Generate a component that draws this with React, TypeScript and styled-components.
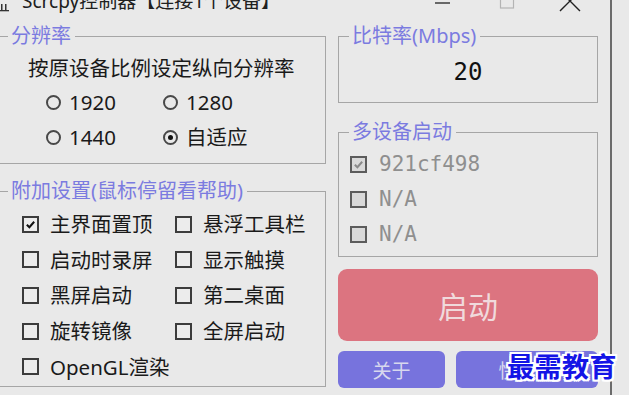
import React from 'react';
import styled, {createGlobalStyle} from 'styled-components';

const GlobalStyle = createGlobalStyle`
  html, body {
    margin: 0;
    padding: 0;
    background: #e9e9e9;
    overflow: hidden;
  }
  body {
    font-family: "Noto Sans", "Noto Sans CJK SC", sans-serif;
    color: #1a1a1a;
  }
`;

const Screen = styled.div`
  position: relative;
  width: 629px;
  height: 395px;
  overflow: hidden;
  background: #e9e9e9;
`;

const Window = styled.div`
  width: 610px;
  height: 395px;
  border-right: 2px solid #6b6b6b;
  display: flex;
  flex-direction: column;
`;

const TitleBar = styled.div`
  height: 14px;
  display: flex;
  align-items: flex-start;
  overflow: hidden;
`;

const AppIcon = styled.svg`
  width: 10px;
  height: 14px;
  flex: none;
`;

const Title = styled.div`
  margin: -8px 0 0 12px;
  font-size: 19px;
  line-height: 19px;
  color: #202020;
  white-space: nowrap;
`;

const Caption = styled.div`
  margin-left: auto;
  margin-right: 7px;
  display: flex;
`;

const CaptionButton = styled.div`
  width: 64px;
  height: 14px;
  display: flex;
  justify-content: center;
`;

const Content = styled.div`
  display: flex;
  gap: 12px;
  padding-top: 11px;
  margin-left: -3px;
`;

const Column = styled.div<{ $w: number }>`
  width: ${p => p.$w}px;
  display: flex;
  flex-direction: column;
`;

const Group = styled.fieldset<{ $h: number; $gap?: number }>`
  margin: 0 0 ${p => p.$gap ?? 0}px 0;
  padding: 0;
  min-width: 0;
  height: ${p => p.$h}px;
  box-sizing: border-box;
  border: 1px solid #a6a6a6;
`;

const Legend = styled.legend`
  margin-left: 10px;
  padding: 0 4px 0 3px;
  font-size: 20px;
  line-height: 22px;
  color: #7b7be0;
`;

const Hint = styled.div`
  padding: 8px 0 0 30px;
  font-size: 20.5px;
  line-height: 26px;
`;

const OptionGrid = styled.div<{ $left: number; $col: number; $top: number; $gap: number }>`
  display: grid;
  grid-template-columns: ${p => p.$col}px 1fr;
  grid-auto-rows: 26px;
  row-gap: ${p => p.$gap}px;
  padding: ${p => p.$top}px 0 0 ${p => p.$left}px;
`;

const Option = styled.label<{ $gap: number }>`
  display: flex;
  align-items: center;
  gap: ${p => p.$gap}px;
  font-size: 20.5px;
  line-height: 26px;
  white-space: nowrap;
`;

const Radio = styled.span<{ $on?: boolean }>`
  width: 15px;
  height: 15px;
  box-sizing: border-box;
  border: 2.5px solid #484848;
  border-radius: 50%;
  flex: none;
  display: flex;
  align-items: center;
  justify-content: center;

  &::after {
    content: "";
    width: 5px;
    height: 5px;
    border-radius: 50%;
    background: #111;
    display: ${p => (p.$on ? 'block' : 'none')};
  }
`;

const Box = styled.span<{ $disabled?: boolean }>`
  width: 17px;
  height: 17px;
  box-sizing: border-box;
  border: 2px solid ${p => (p.$disabled ? '#5c5c5c' : '#3c3c3c')};
  background: ${p => (p.$disabled ? '#d9d9d9' : '#ececec')};
  flex: none;
  display: flex;
  align-items: center;
  justify-content: center;
`;

const BitrateValue = styled.div`
  padding-top: 10px;
  text-align: center;
  font-family: "DejaVu Sans Mono", "Liberation Mono", monospace;
  font-size: 24px;
  line-height: 30px;
  color: #111;
`;

const DeviceList = styled.div`
  display: grid;
  grid-auto-rows: 26px;
  row-gap: 9px;
  padding: 8px 0 0 11px;
`;

const Device = styled.div`
  display: flex;
  align-items: center;
  gap: 12px;
  font-family: "DejaVu Sans Mono", "Liberation Mono", monospace;
  font-size: 21px;
  color: #8f8f8f;
`;

const StartButton = styled.button`
  margin-top: 12px;
  height: 72px;
  border: none;
  border-radius: 9px;
  background: #dc7480;
  color: #f0dadc;
  font-family: "Noto Sans CJK SC", sans-serif;
  font-size: 30px;
  padding: 0;
`;

const ButtonRow = styled.div`
  margin-top: 10px;
  display: flex;
  gap: 11px;
`;

const SmallButton = styled.button<{ $w: number }>`
  width: ${p => p.$w}px;
  height: 37px;
  border: none;
  border-radius: 6px;
  background: #7773dd;
  color: #d8d8ee;
  font-family: "Noto Sans CJK SC", sans-serif;
  font-size: 19px;
  padding: 0;
`;

const Watermark = styled.div`
  position: absolute;
  left: 507px;
  top: 346px;
  font-family: "Noto Sans CJK SC", sans-serif;
  font-weight: 700;
  font-size: 27px;
  line-height: 40px;
  letter-spacing: 0.5px;
  color: #1414e6;
  text-shadow: -2px 0 #fff, 2px 0 #fff, 0 -2px #fff, 0 2px #fff,
    -2px -2px #fff, 2px 2px #fff, -2px 2px #fff, 2px -2px #fff;
`;

function Tick({color}: { color: string }) {
  return (
    <svg width="11" height="11" viewBox="0 0 12 12">
      <path d="M2 6.2 L4.8 9 L10 3" fill="none" stroke={color} strokeWidth="2.2"/>
    </svg>
  );
}

const extras: [string, boolean][] = [
  ['主界面置顶', true], ['悬浮工具栏', false],
  ['启动时录屏', false], ['显示触摸', false],
  ['黑屏启动', false], ['第二桌面', false],
  ['旋转镜像', false], ['全屏启动', false],
  ['OpenGL渲染', false],
];

const devices: [string, boolean][] = [
  ['921cf498', true],
  ['N/A', false],
  ['N/A', false],
];

export default function App() {
  return (
    <Screen>
      <GlobalStyle/>
      <Window>
        <TitleBar>
          <AppIcon viewBox="0 0 10 14">
            <rect x="1" y="4" width="1.5" height="6" fill="#333"/>
            <rect x="5" y="4" width="1.5" height="6" fill="#333"/>
            <rect x="0" y="10" width="9" height="1.3" fill="#333"/>
          </AppIcon>
          <Title>Scrcpy控制器【连接1个设备】</Title>
          <Caption>
            <CaptionButton>
              <svg width="24" height="14" viewBox="0 0 24 14">
                <line x1="4" y1="3" x2="19" y2="3" stroke="#222" strokeWidth="1.3"/>
              </svg>
            </CaptionButton>
            <CaptionButton>
              <svg width="24" height="14" viewBox="0 0 24 14">
                <rect x="5.5" y="-6" width="13" height="14" fill="none" stroke="#b4b4b4" strokeWidth="1.2"/>
              </svg>
            </CaptionButton>
            <CaptionButton>
              <svg width="24" height="14" viewBox="0 0 24 14">
                <path d="M1 -9 L21 11 M21 -9 L1 11" fill="none" stroke="#222" strokeWidth="1.4"/>
              </svg>
            </CaptionButton>
          </Caption>
        </TitleBar>

        <Content>
          <Column $w={329}>
            <Group $h={139} $gap={16}>
              <Legend>分辨率</Legend>
              <Hint>按原设备比例设定纵向分辨率</Hint>
              <OptionGrid $left={48} $col={117} $top={8} $gap={9}>
                <Option $gap={8}><Radio/>1920</Option>
                <Option $gap={8}><Radio/>1280</Option>
                <Option $gap={8}><Radio/>1440</Option>
                <Option $gap={8}><Radio $on/>自适应</Option>
              </OptionGrid>
            </Group>
            <Group $h={207}>
              <Legend>附加设置(鼠标停留看帮助)</Legend>
              <OptionGrid $left={24} $col={153} $top={9} $gap={9.7}>
                {extras.map(([label, on]) => (
                  <Option $gap={11} key={label}>
                    <Box>{on && <Tick color="#111"/>}</Box>
                    {label}
                  </Option>
                ))}
              </OptionGrid>
            </Group>
          </Column>

          <Column $w={260}>
            <Group $h={78} $gap={18}>
              <Legend>比特率(Mbps)</Legend>
              <BitrateValue>20</BitrateValue>
            </Group>
            <Group $h={136}>
              <Legend>多设备启动</Legend>
              <DeviceList>
                {devices.map(([name, on], i) => (
                  <Device key={i}>
                    <Box $disabled>{on && <Tick color="#8a8a8a"/>}</Box>
                    {name}
                  </Device>
                ))}
              </DeviceList>
            </Group>
            <StartButton>启动</StartButton>
            <ButtonRow>
              <SmallButton $w={107}>关于</SmallButton>
              <SmallButton $w={142}>快捷键</SmallButton>
            </ButtonRow>
          </Column>
        </Content>
      </Window>
      <Watermark>最需教育</Watermark>
    </Screen>
  );
}
